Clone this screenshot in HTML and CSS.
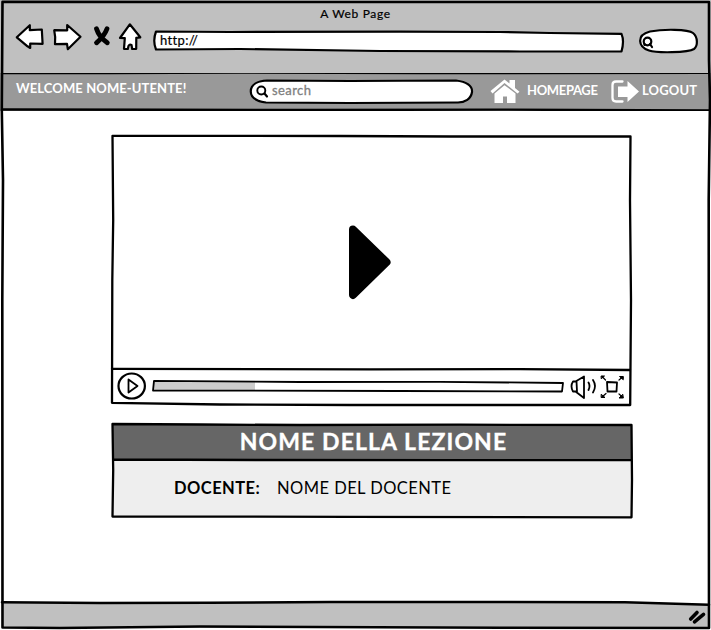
FILE: index.html
```html
<!DOCTYPE html>
<html lang="it">
<head>
<meta charset="utf-8">
<title>A Web Page</title>
<link rel="stylesheet" href="styles.css">
</head>
<body>
<div class="window">
  <header class="chrome">
    <div class="page-title">A Web Page</div>
    <div class="toolbar">
      <svg class="ink white" width="34" height="40" viewBox="14 20 34 40"><path d="M16.8 37.3L29.8 25.2V30.2L41.8 29.5L42.6 43.8L30.2 43.5V48L27.5 46.3Z"/></svg>
      <svg class="ink white" width="38" height="40" viewBox="48 20 38 40"><path d="M54.2 30.2L67.2 30.3V25L80.5 36.8L67.8 49.2L67 43.8L55 44.2Q55.8 37 54.2 30.2Z"/></svg>
      <svg class="cross" width="28" height="40" viewBox="86 20 28 40"><path d="M96.5 28.8Q99 37 107.3 42.8M107 28.8Q104.5 36 96.5 42.8"/></svg>
      <svg class="ink white" width="34" height="40" viewBox="114 20 34 40"><path d="M129.8 24.3L140.3 37.3L136.3 37.8L136.2 48.8L132.2 49L131.5 45Q129.3 44 128.5 46L127.8 49L124 48.8L124.8 38.2L120 38Z"/></svg>
      <div class="url stack">
        <svg class="ink white" width="480" height="40" viewBox="148 20 480 40"><path d="M156 31.5L230 32L400 31.7L500 32L550 33L621.5 33.8Q624.5 41 621.5 51.5L520 51.5L380 51L240 49L156 49.5Q152.500 41 156 31.500Z"/></svg>
        <span class="url-text">http://</span>
      </div>
      <svg class="ink white" width="72" height="40" viewBox="628 20 72 40"><path d="M650 31.500C663 29 688 29 693 33C698 37 698 46 694 49C688 53 656 53 649 50.500C638 47 636 35 650 31.500Z"/><circle cx="647.5" cy="41.500" r="3.800"/><path d="M650 44L652 47M644.500 44V45"/></svg>
    </div>
  </header>

  <nav class="userbar stack">
    <svg class="rules" width="711" height="38" viewBox="0 73 711 38"><path d="M2 73L110 73L240 72.500L420 73L709 72.800M2 109.500L160 109.800L300 110L500 109.600L709 110.500"/></svg>
    <div class="userbar-content">
      <span class="welcome">WELCOME NOME-UTENTE!</span>
      <div class="search stack">
        <svg class="ink white" width="226" height="28" viewBox="248 78 226 28"><path d="M267 80.500L350 81L456 80.500C467 82 472.500 86 472 92C471 99 465 102.500 458 102.500L350 103L266 102.500C255 101 250.500 97 250.800 91C251 85 257 81 267 80.500Z"/><circle class="lens" cx="261.300" cy="90.500" r="4"/><path d="M264.500 93.500L267 96.500"/></svg>
        <span class="search-text">search</span>
      </div>
      <a class="link home"><svg width="32" height="30" viewBox="489 76 32 30"><path d="M490.500 91L504.500 79.500L509.500 83.500V80H515V88L519.500 91.700L517.500 93.500L504.500 83L492.500 93.500Z"/><path d="M494.500 93.500L504.500 85.200L515.500 93.500V103H507V96.500H503V103H494.500Z"/></svg><span>HOMEPAGE</span></a>
      <a class="link logout"><svg width="32" height="30" viewBox="609 76 32 30"><path class="bracket" d="M622.500 81.500H616Q612.500 81.500 612.500 85V98Q612.500 101.500 616 101.500H622.500"/><path d="M618 86.500H627.500V81L639 91.500L627.500 102V97H618Z"/></svg><span>LOGOUT</span></a>
    </div>
  </nav>

  <main class="page">
    <section class="player stack">
      <svg class="frame" width="524" height="274" viewBox="110 133 524 274"><path d="M112.500 135.800L340 136L450 136.500L630.500 136.500L630 200L631 300L630.200 405L350 405L220 404.500L112 402.800L112.300 280L113.200 220Z"/><path d="M112 368.800L370 369.400L520 369.200L630 370"/></svg>
      <div class="player-content">
        <div class="screen"><svg width="44" height="76" viewBox="348 224 44 76"><path class="play" d="M353 229.500L386.500 262.200L353 295Z"/></svg></div>
        <div class="controls">
          <svg class="ink" width="36" height="34" viewBox="114 369 36 34"><ellipse cx="131.700" cy="386" rx="13.200" ry="12.500"/><path class="fine" d="M128.500 379.500L137.500 386L128.500 392.500Z"/></svg>
          <svg class="ink fine track" width="416" height="34" viewBox="150 369 416 34"><path class="elapsed" d="M154 380.800L255 382V390.500L153 390.500Z"/><path d="M154 380.800L300 382L440 381.800L563 383L562 391.500L400 391L153 390.500Z"/></svg>
          <svg class="ink fine" width="32" height="34" viewBox="566 369 32 34"><path d="M575.500 381.500L584 376.500V398L575.500 391.500M573 381.500H576.500L577 391.500H573Q570 386 573 381.500ZM588.500 382.500Q590.500 386 588.500 390M593 380Q597 386 593 392.500"/></svg>
          <svg class="ink fine" width="28" height="34" viewBox="598 369 28 34"><path d="M607 382L617 382.500L616.500 391.500L607.500 391.500Z"/><path class="thin" d="M605.500 380L602 376.500M619 380L622.500 377M606 393.500L602 397M619 394L622.500 397"/><path class="solid" d="M601.500 376H604.500L601.500 378.500ZM623 376.500H619.500L623 379.500ZM601.500 397.500H605L601.500 394.500ZM623 398H619L622.500 394.500Z"/></svg>
        </div>
      </div>
    </section>

    <section class="lesson stack">
      <svg class="frame" width="524" height="98" viewBox="110 421 524 98"><path fill="#666" d="M113 424.500H631V460H113Z"/><path fill="#eee" d="M113 460H631V517H113Z"/><path d="M112.500 424L200 424.500L300 425L460 424.700L631.500 425L632 480L631.500 517.300L350 516.800L112.500 516.500L113.200 470ZM113 459.500L260 460L450 460.200L631 459.800"/></svg>
      <div class="lesson-content">
        <h1>NOME DELLA LEZIONE</h1>
        <p class="teacher"><b>DOCENTE:</b><span>NOME DEL DOCENTE</span></p>
      </div>
    </section>
  </main>

  <footer class="statusbar">
    <svg width="711" height="32" viewBox="0 598 711 32"><path fill="#c0c0c0" d="M2 602.500L200 603L450 601.500L630 602.500L709 605V628H2Z"/><path class="line" d="M2 602.300L100 603L210 602.800L330 602L500 602L625 602.300L709 604.800"/><path class="grip" d="M690.700 619L697 612.500M694.500 621.800L703.500 614.300"/></svg>
  </footer>
  <svg class="outline" width="711" height="630" viewBox="0 0 711 630"><path d="M2.500 1.800L300 2L709 2L709 60L710 100L708.700 200L709 628L500 627.700L200 626.500L60 628L2.500 627.500L2.300 300L3 180L1.800 110Z"/></svg>
</div>
</body>
</html>
```
FILE: styles.css
```css
* { box-sizing: border-box; }
body { margin: 0; background: #fff; color: #000; font-family: Lato, "Open Sans", sans-serif; }
svg { display: block; flex: none; fill: none; stroke-linecap: round; stroke-linejoin: round; }
h1, p { margin: 0; }
span, b, h1, .page-title { white-space: nowrap; }

.window { position: relative; display: flex; flex-direction: column; width: 711px; height: 630px; overflow: hidden; }
.outline { position: absolute; inset: 0; stroke: #000; stroke-width: 2.6; pointer-events: none; }
.stack { display: grid; }
.stack > * { grid-area: 1 / 1; }

.ink { stroke: #000; stroke-width: 2.2; }
.white { fill: #fff; }
.fine { stroke-width: 1.8; }
.thin { stroke-width: 1.2; }
.frame { stroke: #000; stroke-width: 0; }
.frame path:last-child, .player .frame path { stroke-width: 2.3; }

.chrome { height: 73px; padding: 6px 2px 0; background: #c0c0c0; }
.page-title { height: 14px; text-align: center; font-size: 12px; line-height: 15px; letter-spacing: 0.65px; -webkit-text-stroke: 0.2px; }
.toolbar { display: flex; padding-left: 12px; }
.cross { stroke: #000; stroke-width: 4.8; }
.url-text { align-self: start; padding: 12px 0 0 12px; font-size: 13px; line-height: 16px; letter-spacing: 0.35px; -webkit-text-stroke: 0.2px; }

.userbar { height: 38px; background: #999; color: #fff; }
.rules { stroke: #000; stroke-width: 2.4; }
.userbar-content { display: flex; padding: 3px 0 0 16px; font-size: 13px; font-weight: 700; line-height: 16px; }
.welcome { width: 232px; padding-top: 4px; letter-spacing: 0.1px; }
.search { width: 226px; padding-top: 2px; }
.lens { stroke-width: 1.9; }
.search-text { padding: 4px 0 0 24px; color: #808080; font-weight: 400; letter-spacing: 0.4px; -webkit-text-stroke: 0.3px; }
.link { display: flex; }
.link svg { fill: #fff; }
.link span { padding-top: 6px; }
.home { width: 120px; margin-left: 15px; }
.home span { padding-left: 6px; letter-spacing: -0.35px; }
.logout span { padding-left: 1px; letter-spacing: 0.15px; }
.logout .bracket { fill: none; stroke: #fff; stroke-width: 2.3; }

.page { display: flex; flex-direction: column; gap: 14px; flex: 1; padding: 22px 0 0 110px; }
.player { width: 524px; height: 274px; }
.player-content { display: flex; flex-direction: column; }
.screen { height: 236px; padding: 91px 0 0 238px; }
.play { fill: #000; stroke: #000; stroke-width: 8; }
.controls { display: flex; padding-left: 4px; }
.ink path.fine { stroke-width: 1.8; }
.elapsed { fill: #ccc; stroke: none; }
.solid { fill: #000; stroke-width: 1; }

.lesson { width: 524px; height: 98px; }
.lesson-content { display: flex; flex-direction: column; }
h1 { height: 39px; padding: 6px 0 0 3px; color: #fff; text-align: center; font-size: 23px; line-height: 29px; letter-spacing: 1.1px; -webkit-text-stroke: 0.3px; }
.teacher { display: flex; padding: 18px 0 0 64px; font-size: 16.5px; line-height: 20px; letter-spacing: 0.45px; }
.teacher b { width: 103px; }

.statusbar { height: 32px; }
.line { stroke: #000; stroke-width: 2.6; }
.grip { stroke: #000; stroke-width: 3.6; }
```
